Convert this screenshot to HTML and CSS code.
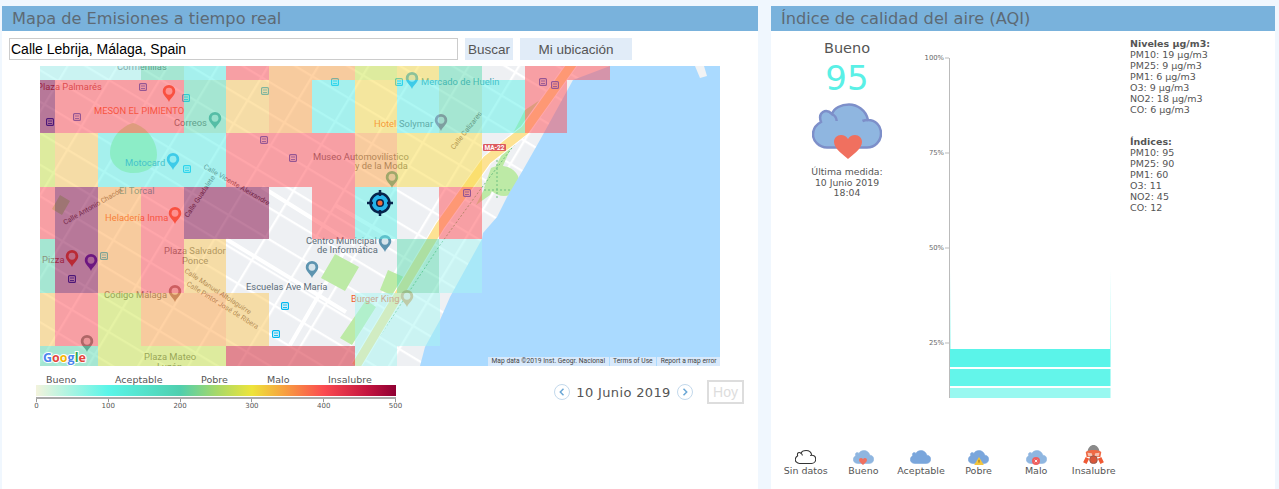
FILE: index.html
```html
<!DOCTYPE html>
<html lang="es">
<head>
<meta charset="utf-8">
<title>Calidad del aire</title>
<link rel="stylesheet" href="styles.css">
</head>
<body>
<svg class="defs" width="0" height="0" aria-hidden="true">
  <defs>
    <symbol id="pin" viewBox="0 0 14 18"><path d="M7 0a6.6 6.6 0 0 1 6.6 6.6C13.600 11 9 13 7 18 5 13 .4 11 .4 6.600A6.600 6.600 0 0 1 7 0z"/><circle class="pin-dot" cx="7" cy="6.600" r="3.600"/></symbol>
    <symbol id="bus" viewBox="0 0 8 8"><rect x=".6" y=".6" width="6.800" height="6.800" rx="1" fill="#fff" fill-opacity=".35" stroke="currentColor" stroke-width="1.200"/><path d="M2 3h4M2 5.400h4" stroke="currentColor" stroke-width="1"/></symbol>
    <symbol id="cloud" viewBox="0 0 70 46"><path d="M15 44.500H55C63 44.500 69 38 69 30.500 69 22 63 17 56 17 54 7 45 1.500 37 1.500 29 1.500 22 5 20 11 14 5 5.500 9 9 19 3.500 22 1 27 1 31.500 1 38 7 44.500 15 44.500Z"/><path class="cloud-line" d="M20 11c3 1.500 4.500 4 4.700 7M56 17c-2 0-4 .3-5.500 1"/></symbol>
    <symbol id="heart" viewBox="0 0 28 24"><path d="M14 24C10 20 0 14 0 7 0 3 3 0 7 0c3 0 5.500 1.500 7 4 1.500-2.500 4-4 7-4 4 0 7 3 7 7 0 7-10 13-14 17z"/></symbol>
  </defs>
</svg>

<main class="page">
  <section class="panel panel-map">
    <h2 class="panel-title">Mapa de Emisiones a tiempo real</h2>
    <div class="search-row">
      <input class="search-input" type="text" value="Calle Lebrija, Málaga, Spain" aria-label="Dirección">
      <button class="btn btn-search" type="button">Buscar</button>
      <button class="btn btn-locate" type="button">Mi ubicación</button>
    </div>

    <div class="map">
      <svg class="map-svg" viewBox="40 66 680 300" width="680" height="300" role="img" aria-label="Mapa de emisiones">
        <defs>
          <pattern id="streets" width="43" height="27" patternUnits="userSpaceOnUse" patternTransform="rotate(31 226 239)">
            <rect width="43" height="27" fill="#eef0f3"/>
            <path d="M0 1H43M1 0V27" stroke="#fff" stroke-width="2.600"/>
          </pattern>
        </defs>
        <rect class="land" x="40" y="66" width="680" height="300"/>
        <path class="major" d="M226 239 346 312M262 187 355 245M290 345 345 250M335 205 395 240"/>
        <path class="park" d="M335 254l24 13-14 24-24-13zM366 300l10 7-24 38-12-7zM60 195l10 6-8 14-10-6zM388 270l18 8-8 20-18-8z"/>
        <path class="park" d="M133 123c14 4 24 18 24 32 0 10-8 18-24 18-14 0-23-10-23-20 0-14 10-26 23-30z"/>
        <path class="park" d="M540 100 510 150 490 195 476 205 500 158 525 110z"/>
        <path class="park" d="M491 168c10-4 22-2 27 8 3 9-2 20-14 20-9 0-14-8-20-8z"/>
        <path class="park-trail" d="M360 366 440 245 480 190 518 140M484 190h30M497 160v40"/>
        <path class="road-casing" d="M356 366 440 226 487 160 525 130 575 60"/>
        <path class="road" d="M356 366 440 226 487 160 525 130 575 60"/>
        <path class="water" d="M610 66 573 80 540 140 523 170 507 197 497 217 483 233 482 239 450 297 440 320 425 347 420 366H720V66Z"/>
        <path class="pier" d="M695 66 700 78 707 76 704 66z"/>

        <g class="buses">
          <use class="b-blue" href="#bus" x="139" y="83" width="8" height="8"/><use class="b-aqua" href="#bus" x="182" y="94" width="8" height="8"/><use class="b-blue" href="#bus" x="73" y="113" width="8" height="8"/><use class="b-dark" href="#bus" x="46" y="118" width="8" height="8"/><use class="b-teal" href="#bus" x="261" y="87" width="8" height="8"/><use class="b-blue" href="#bus" x="260" y="136" width="8" height="8"/><use class="b-blue" href="#bus" x="289" y="154" width="8" height="8"/><use class="b-aqua" href="#bus" x="183" y="165" width="8" height="8"/><use class="b-aqua" href="#bus" x="331" y="78" width="8" height="8"/><use class="b-aqua" href="#bus" x="395" y="78" width="8" height="8"/><use class="b-blue" href="#bus" x="539" y="78" width="8" height="8"/><use class="b-blue" href="#bus" x="551" y="81" width="8" height="8"/><use class="b-blue" href="#bus" x="463" y="189" width="8" height="8"/><use class="b-teal" href="#bus" x="100" y="252" width="8" height="8"/><use class="b-dark" href="#bus" x="68" y="275" width="8" height="8"/><use class="b-aqua" href="#bus" x="281" y="302" width="8" height="8"/><use class="b-aqua" href="#bus" x="272" y="330" width="8" height="8"/>
        </g>
        <g class="pins">
          <use class="p-red" href="#pin" x="162" y="85" width="14" height="17"/><use class="p-teal" href="#pin" x="208" y="112" width="14" height="17"/><use class="p-blue" href="#pin" x="166" y="153" width="14" height="17"/><use class="p-red" href="#pin" x="168" y="207" width="14" height="17"/><use class="p-green" href="#pin" x="385" y="171" width="14" height="17"/><use class="p-blue" href="#pin" x="405" y="72" width="14" height="17"/><use class="p-mauve" href="#pin" x="434" y="114" width="14" height="17"/><use class="p-slate" href="#pin" x="378" y="235" width="14" height="17"/><use class="p-red" href="#pin" x="65" y="250" width="14" height="17"/><use class="p-purple" href="#pin" x="84" y="254" width="14" height="17"/><use class="p-slate" href="#pin" x="305" y="261" width="14" height="17"/><use class="p-brown" href="#pin" x="168" y="285" width="14" height="17"/><use class="p-tan" href="#pin" x="400" y="290" width="14" height="17"/><use class="p-school" href="#pin" x="80" y="335" width="14" height="17"/>
        </g>

        <g class="labels">
          <text class="t-grey" x="117" y="70">Cormenillas</text>
          <text class="t-red" x="37" y="90">Plaza Palmarés</text>
          <text class="t-orange" x="94" y="114">MESON EL PIMIENTO</text>
          <text class="t-grey" x="174" y="126">Correos</text>
          <text class="t-teal" x="125" y="166">Motocard</text>
          <text class="t-teal" x="119" y="194">El Torcal</text>
          <text class="t-orange" x="105" y="221">Heladería Inma</text>
          <text class="t-grey" x="313" y="160">Museo Automovilístico</text>
          <text class="t-grey" x="355" y="169">y de la Moda</text>
          <text class="t-orange" x="374" y="127">Hotel</text>
          <text class="t-grey" x="399" y="127">Solymar</text>
          <text class="t-teal" x="421" y="85">Mercado de Huelin</text>
          <text class="t-slate" x="306" y="244">Centro Municipal</text>
          <text class="t-slate" x="317" y="253">de Informática</text>
          <text class="t-slate" x="246" y="290">Escuelas Ave María</text>
          <text class="t-grey" x="164" y="254">Plaza Salvador</text>
          <text class="t-grey" x="182" y="264">Ponce</text>
          <text class="t-grey" x="104" y="298">Código Málaga</text>
          <text class="t-red" x="42" y="263">Pizza</text>
          <text class="t-orange" x="351" y="302">Burger King</text>
          <text class="t-grey" x="144" y="360">Plaza Mateo</text>
          <text class="t-grey" x="157" y="370">Luzón</text>
          <text class="t-street" transform="translate(203 168) rotate(30)">Calle Vicente Aleixandre</text>
          <text class="t-street" transform="translate(65 225) rotate(-30)">Calle Antonio Chacón</text>
          <text class="t-street" transform="translate(188 218) rotate(-56)">Calle Guadalete</text>
          <text class="t-street" transform="translate(184 272) rotate(33)">Calle Manuel Altolaguirre</text>
          <text class="t-street" transform="translate(186 285) rotate(32)">Calle Pintor José de Ribera</text>
          <text class="t-street" transform="translate(454 150) rotate(-52)">Calle Calizares</text>
        </g>
        <rect class="shield" x="483" y="144" width="23" height="7" rx="1"/>
        <text class="shield-text" x="494.500" y="150">MA-22</text>

        <g class="cells">
          <rect class="c la" x="40" y="66" width="101" height="14"/><rect class="c te" x="141" y="66" width="43" height="14"/><rect class="c aq" x="184" y="66" width="42" height="14"/><rect class="c re" x="226" y="66" width="43" height="14"/><rect class="c or" x="269" y="66" width="86" height="14"/><rect class="c yg" x="355" y="66" width="42" height="14"/><rect class="c ye" x="397" y="66" width="42" height="14"/><rect class="c te" x="439" y="66" width="43" height="14"/><rect class="c re" x="525" y="66" width="85" height="14"/>
          <rect class="c da" x="40" y="80" width="15" height="53"/><rect class="c re" x="55" y="80" width="129" height="53"/><rect class="c te" x="184" y="80" width="42" height="53"/><rect class="c yo" x="226" y="80" width="43" height="53"/><rect class="c or" x="269" y="80" width="43" height="53"/><rect class="c aq" x="312" y="80" width="43" height="53"/><rect class="c ye" x="355" y="80" width="42" height="53"/><rect class="c aq" x="397" y="80" width="42" height="53"/><rect class="c te" x="439" y="80" width="43" height="53"/><rect class="c aq" x="482" y="80" width="43" height="53"/><rect class="c re" x="525" y="80" width="42" height="53"/>
          <rect class="c yg" x="40" y="133" width="15" height="54"/><rect class="c yo" x="55" y="133" width="43" height="54"/><rect class="c aq" x="98" y="133" width="128" height="54"/><rect class="c re" x="226" y="133" width="129" height="54"/><rect class="c or" x="355" y="133" width="42" height="54"/><rect class="c ye" x="397" y="133" width="85" height="54"/>
          <rect class="c re" x="40" y="187" width="15" height="52"/><rect class="c da" x="55" y="187" width="43" height="52"/><rect class="c or" x="98" y="187" width="43" height="52"/><rect class="c re" x="141" y="187" width="43" height="52"/><rect class="c da" x="184" y="187" width="85" height="52"/><rect class="c re" x="312" y="187" width="43" height="52"/><rect class="c aq" x="355" y="187" width="42" height="52"/><rect class="c re" x="439" y="187" width="43" height="52"/>
          <rect class="c te" x="40" y="239" width="15" height="54"/><rect class="c da" x="55" y="239" width="43" height="54"/><rect class="c or" x="98" y="239" width="43" height="54"/><rect class="c re" x="141" y="239" width="43" height="54"/><rect class="c yo" x="184" y="239" width="42" height="54"/><rect class="c te" x="397" y="239" width="42" height="54"/><rect class="c la" x="439" y="239" width="43" height="54"/>
          <rect class="c yo" x="40" y="293" width="15" height="53"/><rect class="c re" x="55" y="293" width="43" height="53"/><rect class="c yg" x="98" y="293" width="43" height="53"/><rect class="c or" x="141" y="293" width="85" height="53"/><rect class="c yo" x="226" y="293" width="43" height="53"/><rect class="c la" x="355" y="293" width="85" height="53"/>
          <rect class="c te" x="40" y="346" width="58" height="20"/><rect class="c yg" x="98" y="346" width="128" height="20"/><rect class="c rd" x="226" y="346" width="129" height="20"/><rect class="c la" x="355" y="346" width="42" height="20"/>
        </g>

        <g class="target">
          <circle class="target-ring" cx="380" cy="203" r="9.500"/>
          <path class="target-ticks" d="M380 190v6M380 210v6M367 203h6M387 203h6"/>
          <circle class="target-core" cx="380" cy="203" r="3.300"/>
        </g>

        <text class="google" x="43" y="362"><tspan class="g-b">G</tspan><tspan class="g-r">o</tspan><tspan class="g-y">o</tspan><tspan class="g-b">g</tspan><tspan class="g-g">l</tspan><tspan class="g-r">e</tspan></text>
      </svg>
      <div class="attribution">
        <span class="attr-item">Map data ©2019 Inst. Geogr. Nacional</span>
        <span class="attr-item">Terms of Use</span>
        <span class="attr-item">Report a map error</span>
      </div>
    </div>

    <div class="map-footer">
      <div class="legend">
        <div class="legend-labels">
          <span>Bueno</span><span>Aceptable</span><span>Pobre</span><span>Malo</span><span>Insalubre</span>
        </div>
        <div class="legend-bar"></div>
        <div class="legend-axis">
          <span class="tick">0</span><span class="tick">100</span><span class="tick">200</span><span class="tick">300</span><span class="tick">400</span><span class="tick">500</span>
        </div>
      </div>
      <div class="date-nav">
        <button class="round-btn" type="button" aria-label="Anterior"><svg viewBox="0 0 16 16" width="16" height="16"><path d="M9.500 4.800 6.300 8l3.200 3.200"/></svg></button>
        <span class="date-text">10 Junio 2019</span>
        <button class="round-btn" type="button" aria-label="Siguiente"><svg viewBox="0 0 16 16" width="16" height="16"><path d="M6.500 4.800 9.700 8l-3.200 3.200"/></svg></button>
        <button class="btn-today" type="button">Hoy</button>
      </div>
    </div>
  </section>

  <section class="panel panel-aqi">
    <h2 class="panel-title">Índice de calidad del aire (AQI)</h2>
    <div class="aqi-body">
      <div class="summary">
        <div class="summary-label">Bueno</div>
        <div class="summary-value">95</div>
        <div class="summary-icon">
          <svg class="big-cloud" width="70" height="46"><use href="#cloud"/></svg>
          <svg class="big-heart" width="28" height="24"><use href="#heart"/></svg>
        </div>
        <p class="summary-date">Última medida:<br>10 Junio 2019<br>18:04</p>
      </div>

      <svg class="chart" viewBox="921 50 204 350" width="204" height="350" role="img" aria-label="Histórico AQI">
        <defs>
          <linearGradient id="fade" x1="0" y1="0" x2="0" y2="1">
            <stop offset="0" stop-color="#5af4e9" stop-opacity="0"/>
            <stop offset="1" stop-color="#5af4e9" stop-opacity=".4"/>
          </linearGradient>
        </defs>
        <path class="axis" d="M949.500 58V398M945 58h4M945 153h4M945 248h4M945 343h4"/>
        <text class="axis-label" x="944" y="60">100%</text>
        <text class="axis-label" x="944" y="155">75%</text>
        <text class="axis-label" x="944" y="250">50%</text>
        <text class="axis-label" x="944" y="345">25%</text>
        <rect x="950" y="270" width="1" height="79" fill="url(#fade)"/>
        <rect x="1110" y="270" width="1" height="79" fill="url(#fade)"/>
        <rect class="bar-a" x="950" y="349" width="160.500" height="18"/>
        <rect class="bar-b" x="950" y="369" width="160.500" height="17"/>
        <rect class="bar-c" x="950" y="388" width="160.500" height="10"/>
      </svg>

      <div class="levels">
        <div class="levels-block">
          <strong>Niveles µg/m3:</strong>
          <span>PM10: 19 µg/m3</span><span>PM25: 9 µg/m3</span><span>PM1: 6 µg/m3</span><span>O3: 9 µg/m3</span><span>NO2: 18 µg/m3</span><span>CO: 6 µg/m3</span>
        </div>
        <div class="levels-block">
          <strong>Índices:</strong>
          <span>PM10: 95</span><span>PM25: 90</span><span>PM1: 60</span><span>O3: 11</span><span>NO2: 45</span><span>CO: 12</span>
        </div>
      </div>
    </div>

    <ul class="scale">
      <li class="scale-item"><span class="scale-icon"><svg class="ci-empty" width="21" height="14"><use href="#cloud"/></svg></span>Sin datos</li>
      <li class="scale-item"><span class="scale-icon"><svg class="ci-blue" width="21" height="14"><use href="#cloud"/></svg><svg class="mini-heart" width="8" height="7"><use href="#heart"/></svg></span>Bueno</li>
      <li class="scale-item"><span class="scale-icon"><svg class="ci-solid" width="21" height="14"><use href="#cloud"/></svg></span>Aceptable</li>
      <li class="scale-item"><span class="scale-icon"><svg class="ci-solid" width="21" height="14"><use href="#cloud"/></svg><svg class="mini-warn" width="10" height="8" viewBox="0 0 12 10"><path d="M6 0l6 10H0z"/><path class="warn-mark" d="M6 3.500v3.500"/></svg></span>Pobre</li>
      <li class="scale-item"><span class="scale-icon"><svg class="ci-blue" width="21" height="14"><use href="#cloud"/></svg><svg class="mini-x" width="8" height="8" viewBox="0 0 11 11"><circle cx="5.500" cy="5.500" r="5.500"/><path d="M3.800 3.800l3.400 3.400M7.200 3.800 3.800 7.200"/></svg></span>Malo</li>
      <li class="scale-item"><span class="scale-icon"><svg class="mask" width="21" height="19" viewBox="0 0 24 22"><path class="mask-head" d="M5 9C5 3 9 0 12 0s7 3 7 9z"/><path class="mask-strap" d="M3 8c4-3 14-3 18 0l-1 6H4z"/><path class="mask-lens" d="M5 9l5 .5L11 13H6zM19 9l-5 .5L13 13h5z"/><path class="mask-side" d="M3 14 0 20l4 2 3-6zM21 14l3 6-4 2-3-6z"/><circle class="mask-filter" cx="12" cy="17" r="4.500"/></svg></span>Insalubre</li>
    </ul>
  </section>
</main>
</body>
</html>
```
FILE: styles.css
```css
* { box-sizing: border-box; }
html, body { margin: 0; height: 489px; overflow: hidden; }
body { background: #f0f7fe; font-family: "DejaVu Sans", Verdana, sans-serif; color: #555; }
.defs { position: absolute; }

.page { display: flex; gap: 13px; height: 489px; padding: 6px 0 0 2px; }
.panel { background: #fff; display: flex; flex-direction: column; }
.panel-map { width: 756px; }
.panel-aqi { width: 504px; }
.panel-title { margin: 0; height: 25px; padding-left: 10px; background: #79b2dc; color: #5d6a75; font-size: 16.200px; font-weight: 400; line-height: 25px; white-space: nowrap; }

.search-row { display: flex; gap: 7px; margin: 7px 0 6px 7px; height: 22px; }
.search-input { width: 449px; height: 22px; padding: 0 0 0 1px; border: 1px solid #ccc; font: 14px "Liberation Sans", Arial, sans-serif; color: #000; outline: 0; }
.btn { height: 22px; padding: 0; border: 0; background: #e1ecf8; color: #555; font: 13.500px "Liberation Sans", Arial, sans-serif; }
.btn-search { width: 48px; }
.btn-locate { width: 112px; }

.map { position: relative; width: 680px; height: 300px; margin-left: 38px; overflow: hidden; }
.map-svg { display: block; }
.land { fill: url(#streets); }
.water { fill: #aadaff; }
.pier { fill: #f2f3f4; }
.major { fill: none; stroke: #fff; stroke-width: 4; }
.park { fill: #bdeaa6; }
.park-trail { fill: none; stroke: #6fbf80; stroke-width: 1; stroke-dasharray: 2 2; }
.road { fill: none; stroke: #fde293; stroke-width: 9; }
.road-casing { fill: none; stroke: #fff; stroke-width: 11; }

.c { fill-opacity: .5; }
.la { fill: #a5f5f2; }
.aq { fill: #5cf0e8; }
.te { fill: #5bdcb2; }
.yg { fill: #cce64a; }
.ye { fill: #fadc4a; }
.yo { fill: #fcc85a; }
.or { fill: #ffa54a; }
.re { fill: #ff4d55; }
.rd { fill: #d8404f; fill-opacity: .6; }
.da { fill: #80003f; }

.b-blue { color: #2a5fd0; }
.b-aqua { color: #00b8f0; }
.b-teal { color: #00a0e0; }
.b-dark { color: #1a2fb0; }
.pin-dot { fill: #fff; fill-opacity: .75; }
.p-red { fill: #f2542a; }
.p-teal { fill: #4f9f9a; }
.p-blue { fill: #1fa7e8; }
.p-green { fill: #3fa88a; }
.p-mauve { fill: #a0608c; }
.p-slate { fill: #5d94b0; }
.p-purple { fill: #5b2fc0; }
.p-brown { fill: #9a6f6a; }
.p-tan { fill: #d7a060; }
.p-school { fill: #5f7f78; }

.labels text { font-family: Roboto, "Liberation Sans", sans-serif; font-size: 9.400px; }
.t-grey { fill: #666; }
.t-red { fill: #b84a45; }
.t-orange { fill: #f05a2a; }
.t-teal { fill: #2a95ae; }
.t-slate { fill: #5c6c78; }
.labels .t-street { font-size: 7px; fill: #6a5050; }
.shield { fill: #dc5a5f; }
.shield-text { font: 700 6.500px Roboto, sans-serif; fill: #fff; text-anchor: middle; }
.target-ring { fill: #25b4ea; stroke: #06234b; stroke-width: 2.500; }
.target-ticks { stroke: #06234b; stroke-width: 2.500; fill: none; }
.target-core { fill: #ef6a3a; stroke: #06234b; stroke-width: 1.500; }
.google { font: 700 12.500px "Open Sans", sans-serif; paint-order: stroke; stroke: #fff; stroke-width: 2; }
.g-b { fill: #4a85ee; }
.g-r { fill: #e3443a; }
.g-y { fill: #f5b400; }
.g-g { fill: #2fa84f; }

.attribution { position: absolute; right: 0; bottom: 0; display: flex; gap: 1px; height: 9px; font: 6.700px/9px Roboto, "Liberation Sans", sans-serif; color: #444; white-space: nowrap; }
.attr-item { padding: 0 3.500px; background: #d8e9fb; }

.map-footer { display: flex; align-items: flex-start; }
.legend { width: 360px; margin: 8px 0 0 34px; }
.legend-labels { display: grid; grid-template-columns: 69px 86px 66px 61px auto; padding-left: 10px; height: 11px; font-size: 9.500px; line-height: 11px; white-space: nowrap; }
.legend-bar { height: 11px; background: linear-gradient(90deg, #f3f3dc 0%, #5af5e8 20%, #4fcfae 40%, #a5d86a 50%, #eee43a 60%, #f7a040 69%, #fb4a50 80%, #c4153f 92%, #8f0033 100%); }
.legend-axis { display: flex; justify-content: space-between; height: 12px; margin-top: 1px; border-top: 2px solid #aaa; font-size: 7px; line-height: 9px; }
.tick { position: relative; width: 1px; padding-top: 3px; display: flex; justify-content: center; white-space: nowrap; background: linear-gradient(#999, #999) 0 0 / 1px 3px no-repeat; }

.date-nav { display: flex; align-items: center; margin: 14px 0 0 158px; height: 24px; }
.round-btn { width: 16px; height: 16px; padding: 0; border: 1px solid #c3d9ec; border-radius: 50%; background: #fff; display: flex; align-items: center; justify-content: center; }
.round-btn svg { flex: none; }
.round-btn path { fill: none; stroke: #6aa7d6; stroke-width: 1.500; }
.date-text { width: 107px; font-size: 13px; letter-spacing: .35px; text-align: center; white-space: nowrap; }
.btn-today { width: 37px; height: 24px; margin-left: 14px; padding: 0; border: 2px solid #ddd; background: #fff; color: #ddd; font: 400 14px "Liberation Sans", Arial, sans-serif; }

.aqi-body { display: flex; flex: 1; min-height: 0; }
.summary { width: 152px; padding-top: 8px; text-align: center; }
.summary-label { height: 19px; font-size: 14.500px; line-height: 18px; }
.summary-value { height: 40px; color: #5af0e6; font-size: 34px; line-height: 40px; }
.summary-icon { position: relative; width: 70px; height: 57px; margin: 5px auto 0; }
.big-cloud { display: block; fill: #8fb6e0; stroke: #7d8fc9; stroke-width: 2.500; }
.cloud-line { fill: none; }
.big-heart { position: absolute; left: 22px; top: 32px; fill: #f0705f; }
.summary-date { margin: 7px 0 0; font-size: 9.300px; line-height: 10.700px; }
.chart { display: block; flex: none; margin: 19px 0 0 -2px; }
.axis { fill: none; stroke: #bbb; stroke-width: 1; }
.axis-label { font-size: 6.800px; fill: #666; text-anchor: end; }
.bar-a { fill: #5af4e9; }
.bar-b { fill: #63f5ea; }
.bar-c { fill: #99f8f0; }
.levels { margin-left: 5px; padding-top: 7px; font-size: 9.500px; line-height: 11px; white-space: nowrap; }
.levels-block { display: flex; flex-direction: column; margin-bottom: 21px; }
.levels strong { font-weight: 700; }

.scale { display: flex; margin: 0 0 13px 6px; padding: 0; list-style: none; }
.scale-item { width: 57.600px; display: flex; flex-direction: column; align-items: center; font-size: 9.500px; line-height: 11px; white-space: nowrap; }
.scale-icon { position: relative; display: flex; align-items: flex-end; justify-content: center; height: 20px; margin-bottom: 1px; }
.ci-empty { fill: #fff; stroke: #333; stroke-width: 3.500; }
.ci-blue { fill: #8fb6e0; stroke: #8fb6e0; stroke-width: 2; }
.ci-solid { fill: #7aa6dc; stroke: #7aa6dc; stroke-width: 2; }
.mini-heart { position: absolute; left: 6.500px; bottom: -1px; fill: #f0705f; }
.mini-warn { position: absolute; left: 5.500px; bottom: -1px; fill: #f4c53d; }
.warn-mark { stroke: #8a6a10; stroke-width: 1.200; }
.mini-x { position: absolute; left: 6.500px; bottom: -1px; fill: #ee5f5f; }
.mini-x path { stroke: #fff; stroke-width: 1.200; fill: none; }
.mask-head { fill: #8a8a8a; }
.mask-strap { fill: #ef6a45; }
.mask-lens { fill: #f6c2b0; }
.mask-side { fill: #ef5a35; }
.mask-filter { fill: #d9573a; stroke: #8a5a50; stroke-width: 1; }
```
